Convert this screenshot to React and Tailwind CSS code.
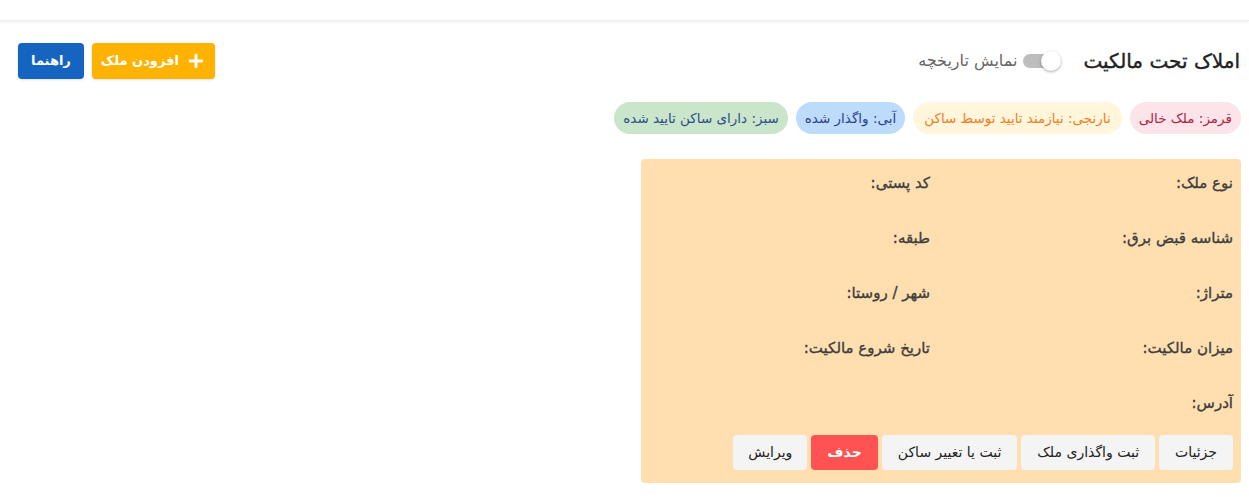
import { Plus } from "lucide-react";

const legend = [
  { text: "قرمز: ملک خالی", cls: "bg-[#fde4ea] text-[#b0243f]" },
  { text: "نارنجی: نیازمند تایید توسط ساکن", cls: "bg-[#fff6dc] text-[#f57c22] px-[11px]" },
  { text: "آبی: واگذار شده", cls: "bg-[#bddcfb] text-[#2a3f8f]" },
  { text: "سبز: دارای ساکن تایید شده", cls: "bg-[#c9e6cb] text-[#2e4b8a]" },
];

const fields = [
  ["نوع ملک:", "کد پستی:"],
  ["شناسه قبض برق:", "طبقه:"],
  ["متراژ:", "شهر / روستا:"],
  ["میزان مالکیت:", "تاریخ شروع مالکیت:"],
];

const actions = [
  { text: "جزئیات", cls: "bg-[#f4f4f4] text-[#222] px-[16px]" },
  { text: "ثبت واگذاری ملک", cls: "bg-[#f4f4f4] text-[#222] px-[16px]" },
  { text: "ثبت یا تغییر ساکن", cls: "bg-[#f4f4f4] text-[#222] px-[16px]" },
  { text: "حذف", cls: "bg-[#ff5252] text-white font-bold px-[16px]" },
  { text: "ویرایش", cls: "bg-[#f4f4f4] text-[#222] px-[15px]" },
];

export default function App() {
  return (
    <div dir="rtl" className="min-h-[497px] bg-white text-[#333]" style={{ fontFamily: '"DejaVu Sans", sans-serif' }}>
      <div className="h-[21px] bg-white shadow-[0_1px_3px_rgba(0,0,0,0.08)] border-b border-[#eee]" />

      <div className="px-[8px]">
        <div className="flex items-center justify-between mt-[22px] h-[36px] pl-[10px]">
          <div className="flex items-center">
            <h1 className="text-[20px] text-[#222] pr-[1px] [-webkit-text-stroke:0.4px_#222]">املاک تحت مالکیت</h1>
            <div className="flex items-center mr-[22px] gap-[6px]">
              <div className="relative w-[38px] h-[20px] flex items-center">
                <div className="absolute left-0 w-[30px] h-[14px] rounded-full bg-[#bdbdbd]" />
                <div className="absolute right-0 top-0 w-[20px] h-[20px] rounded-full bg-white shadow-[0_1px_3px_rgba(0,0,0,0.35)]" />
              </div>
              <span className="text-[16px] text-[#666]">نمایش تاریخچه</span>
            </div>
          </div>
          <div className="flex items-center gap-[8px]">
            <button className="h-[36px] px-[9px] rounded-[4px] bg-[#ffb300] text-white text-[13px] font-bold flex items-center gap-[7px] shadow-sm">
              <Plus size={20} strokeWidth={3.5} />
              افزودن ملک
            </button>
            <button className="h-[36px] px-[13px] rounded-[4px] bg-[#1565c0] text-white text-[13px] font-bold shadow-sm">
              راهنما
            </button>
          </div>
        </div>

        <div className="flex gap-[8px] mt-[23px]">
          {legend.map((l) => (
            <span key={l.text} className={`h-[32px] px-[9px] rounded-full flex items-center text-[13.5px] ${l.cls}`}>
              {l.text}
            </span>
          ))}
        </div>

        <div className="mt-[25px] w-[600px] rounded-[4px] bg-[#ffdfb0] px-[8px] pt-[14px] pb-[13px]">
          <div className="grid grid-cols-2 gap-y-[34px] text-[15px] text-[#3d3d3d] [-webkit-text-stroke:0.35px_#3d3d3d]">
            {fields.map(([a, b]) => (
              <>
                <div key={a} className="h-[21px] leading-[21px]">{a}</div>
                <div key={b} className="h-[21px] leading-[21px] mr-[11px]">{b}</div>
              </>
            ))}
            <div className="h-[21px] leading-[21px]">آدرس:</div>
          </div>
          <div className="flex gap-[4px] mt-[21px]">
            {actions.map((a) => (
              <button key={a.text} className={`h-[35px] rounded-[4px] text-[14px] ${a.cls}`}>
                {a.text}
              </button>
            ))}
          </div>
        </div>
      </div>
    </div>
  );
}
